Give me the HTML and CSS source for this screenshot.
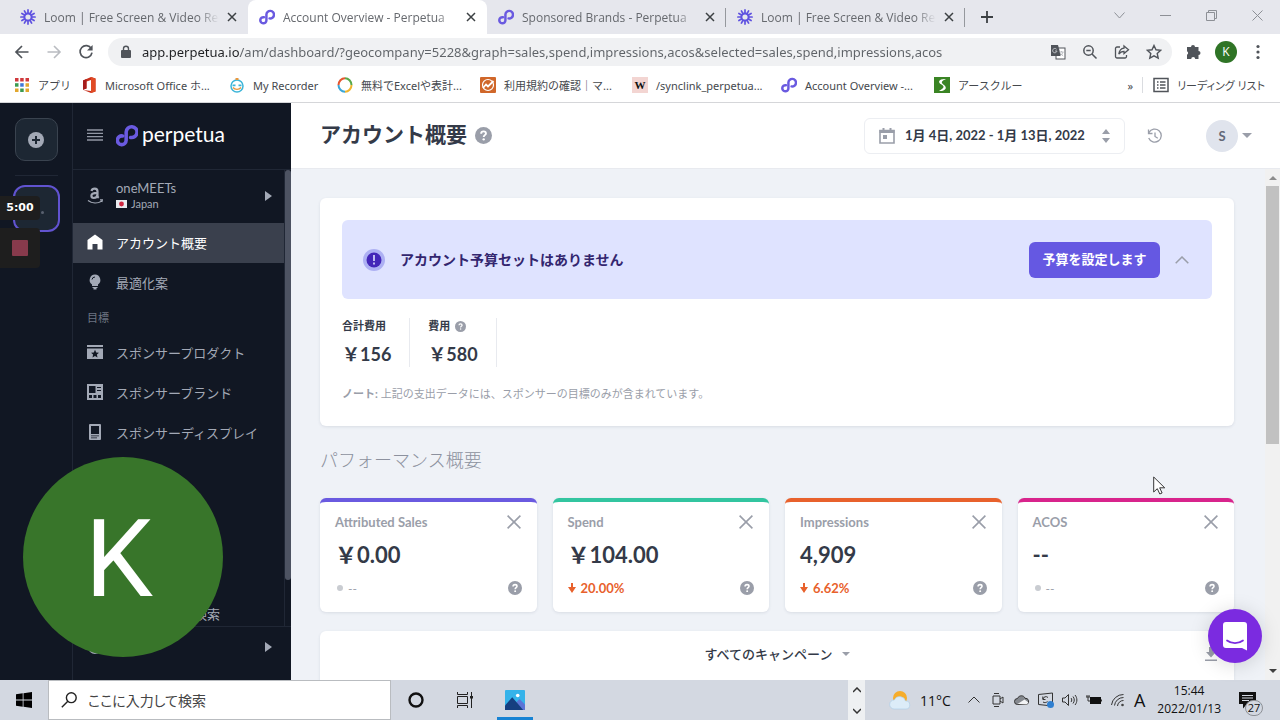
FILE: index.html
```html
<!DOCTYPE html>
<html lang="ja">
<head>
  <meta charset="UTF-8">
  <meta name="viewport" content="width=device-width, initial-scale=1.0">
  <title>Account Overview - Perpetua</title>
  <link rel="stylesheet" href="styles.css">
</head>
<body>
  <!-- shared icons -->
  <svg class="sprite" aria-hidden="true">
    <symbol id="i-perpetua" viewBox="0 0 21 22">
      <path d="M6.2 11.4A4.2 4.2 0 1 0 9.7 15.6V7.6A5.2 5.2 0 1 1 14 12.9" fill="none" stroke="#6a5ae0" stroke-width="3.4" stroke-linecap="round"/>
    </symbol>
    <symbol id="i-loom" viewBox="0 0 16 16">
      <g stroke="#5f52e0" stroke-width="1.7" stroke-linecap="round" fill="none">
        <circle cx="8" cy="8" r="3.6" stroke-width="2"/>
        <path d="M8 .9v3M8 12.1v3M.9 8h3M12.1 8h3M4.4 1.9l1.5 2.6M10.1 11.5l1.5 2.6M1.9 4.4l2.6 1.5M11.5 10.1l2.6 1.5M1.9 11.6l2.6-1.5M11.5 5.9l2.6-1.5M4.4 14.1l1.5-2.6M10.1 4.5l1.5-2.6"/>
      </g>
    </symbol>
    <symbol id="i-close" viewBox="0 0 10 10">
      <path d="M1 1l8 8M9 1L1 9" stroke="currentColor" fill="none"/>
    </symbol>
    <symbol id="i-help" viewBox="0 0 16 16">
      <circle cx="8" cy="8" r="8" fill="#9a9ea9"/>
      <path d="M5.8 6.3c0-1.4 1-2.2 2.3-2.2s2.2.8 2.2 1.9c0 1.6-2.1 1.7-2.1 3.3" fill="none" stroke="#fff" stroke-width="1.8"/>
      <circle cx="8.2" cy="11.6" r="1.1" fill="#fff"/>
    </symbol>
    <symbol id="i-down" viewBox="0 0 8 10">
      <path d="M3 0h2v4h3L4 10 0 4h3z" fill="#e8612c"/>
    </symbol>
  </svg>

  <header class="browser">
    <div class="tabstrip">
      <div class="tab">
        <svg class="favicon"><use href="#i-loom"/></svg>
        <span class="tab-title">Loom | Free Screen &amp; Video Recorder</span>
        <button class="tab-close" aria-label="閉じる"><svg><use href="#i-close"/></svg></button>
      </div>
      <div class="tab active">
        <svg class="favicon"><use href="#i-perpetua"/></svg>
        <span class="tab-title">Account Overview - Perpetua</span>
        <button class="tab-close" aria-label="閉じる"><svg><use href="#i-close"/></svg></button>
      </div>
      <div class="tab divided">
        <svg class="favicon"><use href="#i-perpetua"/></svg>
        <span class="tab-title">Sponsored Brands - Perpetua</span>
        <button class="tab-close" aria-label="閉じる"><svg><use href="#i-close"/></svg></button>
      </div>
      <div class="tab divided">
        <svg class="favicon"><use href="#i-loom"/></svg>
        <span class="tab-title">Loom | Free Screen &amp; Video Recorder</span>
        <button class="tab-close" aria-label="閉じる"><svg><use href="#i-close"/></svg></button>
      </div>
      <button class="new-tab" aria-label="新しいタブ">
        <svg width="12" height="12" viewBox="0 0 12 12"><path d="M6 0v12M0 6h12" stroke="#3c4043" stroke-width="1.8"/></svg>
      </button>
      <div class="window-buttons">
        <button aria-label="タブを検索"><svg width="11" height="11" viewBox="0 0 11 11"><path d="M.5 2.5l5 5.5 5-5.5"/></svg></button>
        <button aria-label="最小化"><svg width="11" height="11" viewBox="0 0 11 11"><path d="M0 5.500h11"/></svg></button>
        <button aria-label="元に戻す"><svg width="11" height="11" viewBox="0 0 11 11"><path d="M.5 2.500h8v8h-8zM2.500 2.500v-2h8v8h-2"/></svg></button>
        <button aria-label="ウィンドウを閉じる"><svg width="11" height="11" viewBox="0 0 11 11"><path d="M.5.5l10 10M10.500.5l-10 10"/></svg></button>
      </div>
    </div>

    <div class="toolbar">
      <button aria-label="戻る"><svg width="16" height="16" viewBox="0 0 16 16"><path d="M14.500 8H2.500M8 2L2 8l6 6" fill="none" stroke="#50545a" stroke-width="1.7"/></svg></button>
      <button aria-label="進む"><svg width="16" height="16" viewBox="0 0 16 16"><path d="M1.500 8h12M8 2l6 6-6 6" fill="none" stroke="#b9bcc1" stroke-width="1.6"/></svg></button>
      <button aria-label="再読み込み"><svg width="16" height="16" viewBox="0 0 16 16"><path d="M13.300 4.600A6 6 0 1 0 14 8.700" fill="none" stroke="#50545a" stroke-width="1.7"/><path d="M14.600 1v5.600H9z" fill="#50545a"/></svg></button>
      <div class="omnibox">
        <svg width="12" height="14" viewBox="0 0 12 14"><rect x="1" y="5" width="10" height="8" rx="1" fill="#50545a"/><path d="M3.500 6V3.700a2.500 2.500 0 0 1 5 0V6" fill="none" stroke="#50545a" stroke-width="1.4"/></svg>
        <input class="url" type="text" aria-label="アドレス" value="app.perpetua.io/am/dashboard/?geocompany=5228&amp;graph=sales,spend,impressions,acos&amp;selected=sales,spend,impressions,acos">
        <button aria-label="翻訳"><svg width="16" height="16" viewBox="0 0 16 16"><rect x="6" y="4" width="9" height="11" fill="#fff" stroke="#50545a"/><path d="M1 1h7l3 11H1z" fill="#50545a"/><path d="M6.600 5.300A2.200 2.200 0 1 0 7 7H5M9.500 8h4M11.500 7v1M10 12c1.500-1 2.500-2 3-4M10.600 9.500l2.600 2.500" fill="none" stroke="#b9bcc1"/></svg></button>
        <button aria-label="ズーム"><svg width="16" height="16" viewBox="0 0 16 16"><g fill="none" stroke="#50545a" stroke-width="1.5"><circle cx="6.500" cy="6.500" r="4.700"/><path d="M10 10l4.500 4.500M4.300 6.500h4.400"/></g></svg></button>
        <button aria-label="共有"><svg width="16" height="16" viewBox="0 0 16 16"><g fill="none" stroke="#50545a" stroke-width="1.3"><path d="M6 3H3a1.500 1.500 0 0 0-1.500 1.500v8A1.500 1.500 0 0 0 3 14h8a1.500 1.500 0 0 0 1.500-1.500V11"/><path d="M10 2l4.500 3.800L10 9.500V7.400C7.500 7.400 6 8.300 4.800 10.200 5.200 7 7 4.500 10 4.200z"/></g></svg></button>
        <button aria-label="ブックマーク"><svg width="16" height="16" viewBox="0 0 16 16"><path d="M8 1.500l2 4.300 4.700.5-3.500 3.200 1 4.700L8 11.800l-4.200 2.400 1-4.700L1.300 6.300 6 5.800z" fill="none" stroke="#50545a" stroke-width="1.4"/></svg></button>
      </div>
      <button aria-label="拡張機能"><svg width="16" height="16" viewBox="0 0 16 16"><path d="M5 3a2 2 0 0 1 4 0h3.500v4a2 2 0 0 1 0 4v4H9.200a2 2 0 0 0-4 0H1v-4.200a2 2 0 0 0 0-3.600V3z" fill="#50545a"/></svg></button>
      <button aria-label="プロフィール"><span class="profile">K</span></button>
      <button aria-label="メニュー"><svg width="4" height="16" viewBox="0 0 4 16"><g fill="#50545a"><circle cx="2" cy="2.500" r="1.600"/><circle cx="2" cy="8" r="1.600"/><circle cx="2" cy="13.500" r="1.600"/></g></svg></button>
    </div>

    <nav class="bookmarks">
      <a href="#"><svg viewBox="0 0 16 16"><path d="M1 1h3.500v3.500H1zM6.200 1h3.500v3.500H6.200z" fill="#d0393c"/><path d="M11.500 1H15v3.500h-3.500z" fill="#d0393c"/><path d="M1 6.200h3.500v3.500H1z" fill="#3c9a50"/><path d="M6.200 6.200h3.500v3.500H6.200z" fill="#4078d8"/><path d="M11.500 6.200H15v3.500h-3.500zM1 11.500h3.500V15H1z" fill="#e2a72e"/><path d="M6.200 11.500h3.500V15H6.200z" fill="#3c9a50"/><path d="M11.500 11.500H15V15h-3.500z" fill="#e2a72e"/></svg>アプリ</a>
      <a href="#"><svg viewBox="0 0 16 16"><path d="M10 0l4.500 1.500v13L10 16l-7.500-3 7.500 1V3L5.500 4.500v7L2 12.800V3.500z" fill="#c8301c"/><path d="M10 0l4.500 1.500v13L10 16z" fill="#e04b25"/><path d="M2 3.500L5.500 2v9.500L2 12.800z" fill="#a51d1d"/></svg>Microsoft Office ホ...</a>
      <a href="#"><svg viewBox="0 0 16 16"><circle cx="8" cy="9" r="6" fill="#fff" stroke="#3db5d8" stroke-width="1.5"/><path d="M6.500 1h3v2h-3z" fill="#e9973e"/><path d="M3.500 7.500h3v1.800h-3zM9.500 7.500h3v1.800h-3z" fill="#3db5d8"/><path d="M4 10.500c2 2.500 6 2.500 8 0" fill="none" stroke="#e9973e" stroke-width="1.4"/></svg>My Recorder</a>
      <a href="#"><svg viewBox="0 0 16 16"><g fill="none" stroke-width="2"><path d="M8 1.200a6.500 6.800 0 0 1 6.500 6.800" stroke="#5aa84a"/><path d="M14.500 8A6.500 6.800 0 0 1 8 14.800" stroke="#efb52f"/><path d="M8 14.800A6.500 6.800 0 0 1 1.500 8" stroke="#3aa6d8"/><path d="M1.500 8A6.500 6.800 0 0 1 8 1.200" stroke="#e5562f"/></g></svg>無料でExcelや表計...</a>
      <a href="#"><svg viewBox="0 0 16 16"><rect width="16" height="16" rx="1" fill="#d0672a"/><circle cx="8" cy="8" r="5.500" fill="none" stroke="#fff" stroke-width="1.2"/><path d="M3 11l3-3.500 2 2L13.500 4" fill="none" stroke="#fff" stroke-width="1.8"/></svg>利用規約の確認｜マ...</a>
      <a href="#"><span class="wp">W</span>/synclink_perpetua...</a>
      <a href="#"><svg><use href="#i-perpetua"/></svg>Account Overview -...</a>
      <a href="#"><svg viewBox="0 0 16 16"><rect width="16" height="16" fill="#3a8424"/><path d="M12 2C5 1.500 3 5 7.500 7.500S8 12 5 14c6 .5 9-3 5-6S8 4 12 2z" fill="#fff"/></svg>アースクルー</a>
      <span class="more">»</span>
      <a class="reading" href="#"><svg viewBox="0 0 16 16"><rect x="1" y="1.500" width="14" height="13" fill="none" stroke="#50545a" stroke-width="1.5"/><path d="M4 5h1.500M4 8h1.500M4 11h1.500M7 5h5.500M7 8h5.500M7 11h5.500" stroke="#50545a" stroke-width="1.5"/></svg>リーディング リスト</a>
    </nav>
  </header>

  <div class="app">
    <aside class="rail">
      <button class="rail-add" aria-label="追加"><svg width="16" height="16" viewBox="0 0 16 16"><circle cx="8" cy="8" r="8" fill="#a3a9b6"/><path d="M8 4v8M4 8h8" stroke="#1d2733" stroke-width="2"/></svg></button>
      <hr>
      <button class="rail-current" aria-label="ワークスペース"><i></i></button>
    </aside>

    <aside class="sidebar">
      <div class="brand">
        <button class="burger" aria-label="メニュー"><svg width="16" height="12" viewBox="0 0 16 12"><path d="M0 1h16M0 4.300h16M0 7.700h16M0 11h16" stroke="#9298a5" stroke-width="1.3"/></svg></button>
        <svg class="brand-mark"><use href="#i-perpetua"/></svg>
        <span class="brand-name">perpetua</span>
      </div>
      <div class="side-scroll">
        <nav class="side-nav">
          <a class="account" href="#">
            <svg width="16" height="18" viewBox="0 0 16 18"><g fill="none" stroke="#a3a9b6"><path d="M4.500 4C5 2 6.300 1.700 7.700 1.700c2 0 2.800 1 2.800 2.800v4.300c0 .9.400 1.500 1.200 2.100M10.400 5.800c-3.500 0-6 .6-6 3 0 1.500 1 2.200 2.300 2.200 1.900 0 3.700-1.200 3.700-3.400" stroke-width="2.2"/><path d="M1 13.500c4 3 9.500 3.200 13.500.7M13 12.800h2.300l-.5 2.200" stroke-width="1.3"/></g></svg>
            <span class="account-text">oneMEETs<small><svg width="11" height="8" viewBox="0 0 11 8"><rect width="11" height="8" fill="#e9ebef"/><circle cx="5.500" cy="4" r="2.400" fill="#cf2740"/></svg>Japan</small></span>
            <i class="arrow"></i>
          </a>
          <a class="current" href="#"><svg width="16" height="16" viewBox="0 0 16 16"><path d="M8 .5L15.500 6v9.500H10.500V10h-5v5.500H.5V6z" fill="#fff"/></svg>アカウント概要</a>
          <a href="#"><svg width="16" height="16" viewBox="0 0 16 16"><path d="M8 .5a5.500 5.500 0 0 1 3 10V12H5v-1.500a5.500 5.500 0 0 1 3-10zM5.500 13h5v1h-1v1.500h-3V14h-1z" fill="#a3a9b6"/><path d="M5 5.500A3 3 0 0 1 8 3" fill="none" stroke="#111723"/></svg>最適化案</a>
          <h3>目標</h3>
          <a href="#"><svg width="16" height="16" viewBox="0 0 16 16"><path d="M0 1h16v2H0zM0 4.500h16V15H0z" fill="#a3a9b6"/><path d="M8 5.800l1.200 2.600 2.800.3-2.100 1.900.6 2.800L8 12l-2.500 1.400.6-2.800L4 8.700l2.800-.3z" fill="#111723"/></svg>スポンサープロダクト</a>
          <a href="#"><svg width="16" height="16" viewBox="0 0 16 16"><rect width="16" height="16" fill="#a3a9b6"/><path d="M2 2h6.500v7H2zM10 3h4v1h-4zM10 6h4v1h-4zM2 11h3v3H2zM6.500 11h3v3h-3zM11 11h3v3h-3z" fill="#111723"/></svg>スポンサーブランド</a>
          <a href="#"><svg width="16" height="16" viewBox="0 0 16 16"><rect x="2" width="12" height="16" rx="1" fill="#a3a9b6"/><path d="M4 2h8v8H4zM4 11.500h8v.8H4zM4 13.500h6v.8H4z" fill="#111723"/></svg>スポンサーディスプレイ</a>
          <a class="last" href="#">キーワードの検索</a>
        </nav>
        <div class="side-bar"><i></i></div>
      </div>
      <a class="side-foot" href="#" aria-label="アカウント"><svg width="16" height="16" viewBox="0 0 16 16"><circle cx="8" cy="8" r="7" fill="#a3a9b6"/></svg><i class="arrow"></i></a>
    </aside>

    <main class="main">
      <div class="page-head">
        <h1>アカウント概要</h1>
        <svg class="head-help"><use href="#i-help"/></svg>
        <button class="date-range">
          <svg width="16" height="16" viewBox="0 0 16 16"><path d="M1 2.500h14V15H1z" fill="none" stroke="#9a9ea9" stroke-width="1.6"/><path d="M.5 2h15v3H.5zM3.500 0h2v3h-2zM10.500 0h2v3h-2zM4 7h4v4H4z" fill="#9a9ea9"/></svg>
          <span>1月 4日, 2022 - 1月 13日, 2022</span>
          <svg width="8" height="14" viewBox="0 0 8 14"><path d="M4 0l4 5H0zM4 14l4-5H0z" fill="#9a9ea9"/></svg>
        </button>
        <button class="history" aria-label="履歴"><svg width="16" height="16" viewBox="0 0 16 16"><path d="M2 4.500A6.500 6.500 0 1 1 1.700 10M1.500 1.500v4h4M8 4.500V8.500l2.800 1.700" fill="none" stroke="#9a9ea9" stroke-width="1.3"/></svg></button>
        <button class="user" aria-label="ユーザー"><span>S</span><i class="caret"></i></button>
      </div>

      <div class="content-row">
        <div class="content">
          <section class="card budget">
            <div class="banner">
              <svg width="22" height="22" viewBox="0 0 22 22"><circle cx="11" cy="11" r="11" fill="#adb0f3"/><circle cx="11" cy="11" r="7.500" fill="#4326b8"/><path d="M11 6v6M11 13.500v2" stroke="#dfe3ff" stroke-width="1.6"/></svg>
              <h2>アカウント予算セットはありません</h2>
              <button class="primary">予算を設定します</button>
              <button class="collapse" aria-label="折りたたむ"><svg width="14" height="8" viewBox="0 0 14 8"><path d="M.7 7.300L7 1l6.300 6.300" fill="none" stroke="#9a9ea9" stroke-width="1.5"/></svg></button>
            </div>
            <dl class="totals">
              <div><dt>合計費用</dt><dd>￥156</dd></div>
              <div><dt>費用 <svg><use href="#i-help"/></svg></dt><dd>￥580</dd></div>
            </dl>
            <p class="note"><b>ノート:</b> 上記の支出データには、スポンサーの目標のみが含まれています。</p>
          </section>

          <h2 class="section-title">パフォーマンス概要</h2>

          <div class="metrics">
            <section class="card metric sales">
              <header><h3>Attributed Sales</h3><button aria-label="削除"><svg><use href="#i-close"/></svg></button></header>
              <strong>￥0.00</strong>
              <footer><span class="flat"><i></i>--</span><svg><use href="#i-help"/></svg></footer>
            </section>
            <section class="card metric spend">
              <header><h3>Spend</h3><button aria-label="削除"><svg><use href="#i-close"/></svg></button></header>
              <strong>￥104.00</strong>
              <footer><span class="down"><svg><use href="#i-down"/></svg>20.00%</span><svg><use href="#i-help"/></svg></footer>
            </section>
            <section class="card metric impressions">
              <header><h3>Impressions</h3><button aria-label="削除"><svg><use href="#i-close"/></svg></button></header>
              <strong>4,909</strong>
              <footer><span class="down"><svg><use href="#i-down"/></svg>6.62%</span><svg><use href="#i-help"/></svg></footer>
            </section>
            <section class="card metric acos">
              <header><h3>ACOS</h3><button aria-label="削除"><svg><use href="#i-close"/></svg></button></header>
              <strong>--</strong>
              <footer><span class="flat"><i></i>--</span><svg><use href="#i-help"/></svg></footer>
            </section>
          </div>

          <section class="card chart">
            <label class="campaign">
              <select aria-label="キャンペーン"><option>すべてのキャンペーン</option></select>
              <i class="caret"></i>
            </label>
            <button class="download" aria-label="ダウンロード"><svg width="14" height="14" viewBox="0 0 14 14"><path d="M5 0h4v5h3L7 10.500 2 5h3zM1 12.500h12V14H1z" fill="#9a9ea9"/></svg></button>
          </section>
        </div>
        <div class="scrollbar"><i class="up"></i><i class="thumb"></i><i class="dn"></i></div>
      </div>
    </main>
  </div>

  <footer class="taskbar">
    <button class="start" aria-label="スタート"><svg width="16" height="16" viewBox="0 0 16 16"><path d="M0 2.300L6.700 1.300V7.600H0zM7.500 1.200L16 0v7.600H7.500zM0 8.400h6.700v6.300L0 13.700zM7.500 8.400H16V16l-8.500-1.200z" fill="#000"/></svg></button>
    <label class="search">
      <svg width="16" height="16" viewBox="0 0 16 16"><g fill="none" stroke="#222" stroke-width="1.4"><circle cx="10.300" cy="5.700" r="4.900"/><path d="M6.800 9.200L.8 15.200"/></g></svg>
      <input type="text" placeholder="ここに入力して検索" aria-label="検索">
    </label>
    <button class="task" aria-label="Cortana"><svg width="16" height="16" viewBox="0 0 16 16"><circle cx="8" cy="8" r="6.500" fill="none" stroke="#111" stroke-width="2.4"/></svg></button>
    <button class="task" aria-label="タスク ビュー"><svg width="16" height="16" viewBox="0 0 16 16"><g fill="none" stroke="#222"><path d="M.5 0v2.500h10V0M.5 4.500h10v7H.5zM.5 16v-2.500h10V16M14.500 0v16"/></g><path d="M13 4h3v2.500h-3z" fill="#222"/></svg></button>
    <button class="task running" aria-label="フォト"><svg width="20" height="20" viewBox="0 0 22 22"><rect width="22" height="22" rx="1" fill="#35b3ea"/><path d="M9 17l7-7 6 6v6H9z" fill="#5b74d6"/><path d="M0 17L8 8l12 14H0z" fill="#153f80"/><circle cx="14" cy="6" r="2" fill="#fff"/></svg></button>
    <div class="pager">
      <svg width="8" height="6" viewBox="0 0 8 6"><path d="M0 5l4-4 4 4"/></svg>
      <svg width="8" height="6" viewBox="0 0 8 6"><path d="M0 1l4 4 4-4"/></svg>
    </div>
    <div class="weather">
      <svg width="22" height="20" viewBox="0 0 22 20"><circle cx="11" cy="8" r="7" fill="#f6ad2b"/><path d="M5 19a4.500 4.500 0 0 1 .3-9A6 6 0 0 1 16.500 11a4 4 0 0 1 .5 8z" fill="#dcecf8" stroke="#a9cde8" stroke-width=".6"/></svg>
      11°C
    </div>
    <div class="tray">
      <svg viewBox="0 0 16 16"><path d="M2.500 10.500l5.500-5.500 5.500 5.500"/></svg>
      <svg viewBox="0 0 16 16"><path d="M3 4h7v8H3zM10 7l3-2v6l-3-2M4 1.500h5M4 14.500h5"/></svg>
      <svg viewBox="0 0 16 16"><path class="cloud" d="M3.500 12.500a3 3 0 0 1 0-6C5 2.800 10 3 11 6.300a3.200 3.200 0 0 1 1.500 6.200z"/><path class="cloud-light" d="M3.500 12l7-4.500 4 3-2 2z"/></svg>
      <svg viewBox="0 0 16 16"><path d="M.5 2.500L14.500 1v13l-14-1.500zM10 5.500A3 3 0 0 0 5 7M4.800 4.500V7.500H7.500M5 10c1.500 1 3 .8 4.500-.5"/><circle cx="12.500" cy="12.500" r="3.500" fill="#2f7fd0"/></svg>
      <svg viewBox="0 0 16 16"><path d="M.5 6h2.500l3.500-3.500v11L3 10H.5zM9 6c1 1 1 3 0 4M11 4.500c1.700 2 1.700 5 0 7M13 3c2.500 3 2.500 7 0 10"/></svg>
      <svg viewBox="0 0 16 16"><rect x="4" y="5" width="11" height="7" fill="#111"/><path d="M0 5h4M2 5v4h2M1 3v2M3 3v2M15.500 7.500v2"/></svg>
      <svg viewBox="0 0 16 16"><path d="M1.500 13A12 12 0 0 1 13.500 2.500M4.500 13.500A9 9 0 0 1 13.500 5.500M7.500 14A6 6 0 0 1 13.500 8.500"/><circle cx="12.500" cy="13" r="1.300" fill="#444"/></svg>
      <span class="ime">A</span>
    </div>
    <time class="clock">15:44<br>2022/01/13</time>
    <button class="notices" aria-label="通知"><svg width="17" height="17" viewBox="0 0 17 17"><path d="M0 0h17v12H8l-4 4.500V12H0z" fill="#111"/><path d="M3 3.500h11M3 6h11M3 8.500h7" stroke="#d3d8e1"/></svg><span>27</span></button>
  </footer>

  <!-- recorder overlay -->
  <div class="rec-time">5:00</div>
  <button class="rec-stop" aria-label="停止"><i></i></button>
  <div class="camera">K</div>
  <button class="chat" aria-label="チャット"><svg width="26" height="30" viewBox="0 0 26 30"><path d="M4 1h18a3 3 0 0 1 3 3v25.500L20 27H4a3 3 0 0 1-3-3V4a3 3 0 0 1 3-3z" fill="#fff"/><path d="M5 19.500c4.500 3.500 11.500 3.500 16 0" fill="none" stroke="#7b2be0" stroke-width="1.7" stroke-linecap="round"/></svg></button>
  <svg class="pointer" width="13" height="19" viewBox="0 0 13 19"><path d="M.7 1v15l3.600-3.300 2.500 5.300 2.300-1-2.400-5.200h5z" fill="#fff" stroke="#222" stroke-width=".9"/></svg>
</body>
</html>
```

FILE: styles.css
```css
* {
  box-sizing: border-box;
}
body {
  margin: 0;
  height: 100vh;
  display: flex;
  flex-direction: column;
  overflow: hidden;
  position: relative;
  font-family: Lato, "Noto Sans CJK JP", sans-serif;
  color: #343a48;
}
h1, h2, h3, p, dl, dd {
  margin: 0;
}
a {
  color: inherit;
  text-decoration: none;
}
button {
  padding: 0;
  border: none;
  background: none;
  font: inherit;
  color: inherit;
  display: flex;
  align-items: center;
  justify-content: center;
}
svg {
  flex: none;
  display: block;
}
.sprite {
  display: none;
}

/* browser */
.browser, .taskbar {
  font-family: "Open Sans", "Noto Sans CJK JP", sans-serif;
  flex: none;
}
.browser {
  background: #fff;
  border-bottom: 1px solid #d5d6d9;
}
.tabstrip {
  display: flex;
  height: 34px;
  padding-left: 9px;
  background: #e6e7ed;
}
.tab {
  flex: 0 1 239px;
  min-width: 0;
  display: flex;
  align-items: center;
  gap: 8px;
  padding: 0 11px;
  font-size: 12px;
  color: #66696e;
  position: relative;
}
.tab.active {
  background: #fff;
  border-radius: 8px 8px 0 0;
}
.tab.divided::after {
  content: "";
  position: absolute;
  right: 0;
  top: 8px;
  height: 19px;
  border-right: 1px solid #95989d;
}
.favicon {
  width: 16px;
  height: 16px;
}
.tab-title {
  flex: 1;
  overflow: hidden;
  white-space: nowrap;
  -webkit-mask-image: linear-gradient(to right, #000 88%, transparent);
  mask-image: linear-gradient(to right, #000 88%, transparent);
}
.tab-close svg {
  width: 10px;
  height: 10px;
  color: #3c4043;
  stroke-width: 1.5;
}
.new-tab {
  width: 44px;
}
.window-buttons {
  display: flex;
  margin-left: auto;
  height: 30px;
}
.window-buttons button {
  width: 46px;
}
.window-buttons path {
  fill: none;
  stroke: #8d9096;
}
.toolbar {
  display: flex;
  align-items: center;
  height: 36px;
  padding: 0 6px;
}
.toolbar button {
  width: 32px;
  height: 28px;
  flex: none;
}
.omnibox {
  flex: 1;
  display: flex;
  align-items: center;
  height: 28px;
  margin: 0 6px;
  padding: 0 2px 0 12px;
  border-radius: 14px;
  background: #f0f1f3;
}
.url {
  flex: 1;
  min-width: 0;
  margin-left: 10px;
  padding: 0;
  border: none;
  font: 13px "Noto Sans", sans-serif;
  color: #5f6368;
  background: linear-gradient(to right, #202124 98px, #5f6368 98px);
  -webkit-background-clip: text;
  background-clip: text;
  -webkit-text-fill-color: transparent;
}
.profile {
  width: 22px;
  height: 22px;
  border-radius: 50%;
  background: #2f7426;
  color: #fff;
  font-size: 12px;
  line-height: 22px;
}
.bookmarks {
  display: grid;
  grid-template-columns: 67px 148px 108px 143px 152px 149px 153px 1fr auto auto;
  align-items: center;
  height: 32px;
  padding: 0 15px 2px 14px;
  font-family: "Noto Sans", "Noto Sans CJK JP", sans-serif;
  font-size: 11px;
  color: #45484d;
  white-space: nowrap;
}
.bookmarks a {
  display: flex;
  align-items: center;
  gap: 8px;
}
.bookmarks svg, .wp {
  width: 16px;
  height: 16px;
}
.wp {
  background: #f3d5d2;
  color: #111;
  font: bold 11px/16px "Liberation Serif", serif;
  text-align: center;
}
.more {
  padding-right: 9px;
}
.reading {
  padding-left: 10px;
  border-left: 1px solid #dadce0;
  font-feature-settings: "palt";
}

/* app */
.app {
  flex: 1;
  min-height: 0;
  display: flex;
  background: #eff2f7;
}
.rail {
  flex: none;
  width: 73px;
  padding-top: 15px;
  display: flex;
  flex-direction: column;
  align-items: center;
  background: #111723;
  border-right: 1px solid #202735;
}
.rail-add {
  width: 43px;
  height: 43px;
  border: 1px solid #3a434f;
  border-radius: 10px;
  background: #1d2733;
}
.rail hr {
  width: 43px;
  margin: 14px 0 9px;
  border: none;
  border-top: 1px solid #202735;
}
.rail-current {
  width: 47px;
  height: 47px;
  border: 2px solid #6153d0;
  border-radius: 12px;
  background: #1d2733;
}
.rail-current i {
  width: 3px;
  height: 3px;
  margin: 8px 0 0 12px;
  border-radius: 50%;
  background: #596170;
}
.sidebar {
  flex: none;
  width: 218px;
  display: flex;
  flex-direction: column;
  background: #111723;
  color: #a3a9b6;
}
.brand {
  display: flex;
  align-items: center;
  height: 67px;
  padding: 0 14px 2px;
  border-bottom: 1px solid #202735;
}
.brand-mark {
  width: 22px;
  height: 23px;
  margin: 0 4px 0 13px;
}
.brand-name {
  padding-bottom: 3px;
  font-size: 21px;
  line-height: 24px;
  color: #fff;
}
.side-scroll {
  flex: 1;
  min-height: 0;
  display: flex;
  border-bottom: 1px solid #202735;
}
.side-nav {
  flex: 1;
  display: flex;
  flex-direction: column;
  font-size: 13px;
}
.side-nav a {
  display: flex;
  align-items: center;
  gap: 13px;
  height: 40px;
  padding: 0 14px 2px;
}
.side-nav .account {
  height: 53px;
}
.account-text {
  line-height: 16px;
}
.account small {
  display: flex;
  align-items: center;
  gap: 4px;
  font-size: 11px;
}
.arrow {
  margin-left: auto;
  border: 5px solid transparent;
  border-left: 7px solid #a3a9b6;
  border-right: none;
}
.side-nav .account .arrow {
  margin-right: -2px;
}
.side-nav .current {
  background: #3a404d;
  color: #fff;
}
.side-nav h3 {
  padding: 7px 14px;
  font-size: 11px;
  line-height: 16px;
  font-weight: normal;
  color: #6d7482;
}
.side-nav .last {
  margin-top: auto;
  height: 24px;
  padding-left: 43px;
}
.side-bar {
  width: 7px;
  border-left: 1px solid #202735;
}
.side-bar i {
  display: block;
  height: 90%;
  border-radius: 3px;
  background: #4d5362;
}
.side-foot {
  display: flex;
  align-items: center;
  height: 53px;
  padding: 0 19px 14px 14px;
}

/* main */
.main {
  flex: 1;
  min-width: 0;
  display: flex;
  flex-direction: column;
}
.page-head {
  flex: none;
  display: flex;
  align-items: center;
  height: 66px;
  padding: 0 28px 0 29px;
  background: #fff;
  border-bottom: 1px solid #e8eaef;
}
.page-head h1 {
  padding-bottom: 4px;
  font-size: 21px;
  line-height: 32px;
}
.head-help {
  width: 17px;
  height: 17px;
  margin-left: 8px;
}
.date-range {
  width: 261px;
  height: 36px;
  margin-left: auto;
  padding: 0 14px;
  border: 1px solid #eceef2;
  border-radius: 6px;
  font-size: 13px;
  font-weight: bold;
  white-space: nowrap;
}
.date-range span {
  flex: 1;
  padding: 0 0 2px 10px;
  text-align: left;
}
.history {
  margin: 0 43px 0 22px;
}
.user {
  gap: 4px;
}
.user span {
  width: 32px;
  height: 32px;
  border-radius: 50%;
  background: #e0e4ed;
  font-size: 13px;
  font-weight: bold;
  line-height: 32px;
  color: #626877;
}
.caret {
  border: 5px solid transparent;
  border-top-color: #9a9ea9;
  border-bottom: none;
}
.content-row {
  flex: 1;
  min-height: 0;
  display: flex;
}
.content {
  flex: 1;
  min-width: 0;
  overflow: hidden;
  padding: 29px 31px 0 29px;
}
.card {
  background: #fff;
  border-radius: 6px;
  box-shadow: 0 1px 3px rgba(60, 70, 100, 0.12);
}
.budget {
  padding: 22px 22px 24px;
}
.banner {
  display: flex;
  align-items: center;
  height: 79px;
  padding: 0 23px 0 21px;
  border-radius: 6px;
  background: #dfe3ff;
}
.banner h2 {
  margin: 0 auto 0 15px;
  padding-bottom: 2px;
  font-size: 14px;
  color: #33266f;
}
.primary {
  width: 131px;
  height: 36px;
  padding-bottom: 2px;
  border-radius: 6px;
  background: #6558e2;
  color: #fff;
  font-size: 13px;
  font-weight: bold;
}
.collapse {
  margin-left: 15px;
}
.totals {
  display: flex;
  gap: 18px;
  margin-top: 19px;
}
.totals div {
  padding-right: 18px;
  border-right: 1px solid #e8eaef;
}
.totals dt {
  display: flex;
  align-items: center;
  gap: 5px;
  font-size: 11px;
  font-weight: bold;
  line-height: 16px;
}
.totals svg {
  width: 11px;
  height: 11px;
}
.totals dd {
  margin-top: 8px;
  font-size: 18px;
  font-weight: bold;
  line-height: 25px;
}
.note {
  margin-top: 19px;
  font-size: 11px;
  line-height: 16px;
  color: #9a9ea9;
}
.section-title {
  margin: 21px 0 25px;
  font-size: 18px;
  font-weight: 300;
  line-height: 26px;
  color: #8c919e;
}
.metrics {
  display: grid;
  grid-template-columns: repeat(4, 1fr);
  gap: 16px;
}
.metric {
  padding: 11px 15px 15px;
  border-top: 4px solid;
}
.sales { border-top-color: #6a5ae0; }
.spend { border-top-color: #33c5a0; }
.impressions { border-top-color: #e8612c; }
.acos { border-top-color: #d8248c; }
.metric header, .metric footer {
  display: flex;
  align-items: center;
  justify-content: space-between;
}
.metric h3 {
  font-size: 13px;
  line-height: 18px;
  color: #9a9ea9;
}
.metric button svg {
  width: 16px;
  height: 16px;
  color: #9a9ea9;
  stroke-width: 1;
}
.metric strong {
  display: block;
  margin: 8px 0;
  font-size: 22px;
  line-height: 32px;
}
.metric footer {
  height: 18px;
  font-size: 13px;
}
.metric footer > svg {
  width: 14px;
  height: 14px;
}
.flat, .down {
  display: flex;
  align-items: center;
  gap: 5px;
}
.flat {
  padding-left: 2px;
  font-size: 12px;
  color: #9a9ea9;
}
.flat i {
  width: 6px;
  height: 6px;
  border-radius: 50%;
  background: #c9ccd1;
}
.down {
  font-weight: bold;
  color: #e8612c;
}
.down svg {
  width: 8px;
  height: 10px;
}
.chart {
  display: grid;
  grid-template-columns: 1fr auto 1fr;
  align-items: center;
  height: 120px;
  margin-top: 19px;
  padding: 13px 16px;
  align-content: start;
}
.campaign {
  grid-column: 2;
  display: flex;
  align-items: center;
  gap: 6px;
}
.campaign select {
  appearance: none;
  padding: 0;
  border: none;
  background: none;
  font: 500 13px/20px "Noto Sans CJK JP", sans-serif;
  color: #343a48;
}
.campaign .caret {
  border-width: 4px 4px 0;
}
.download {
  justify-self: end;
}
.scrollbar {
  width: 15px;
  display: flex;
  flex-direction: column;
  align-items: center;
  background: #f1f1f1;
  padding: 7px 0;
}
.scrollbar .up {
  border: 4px solid transparent;
  border-bottom-color: #8c8c8c;
  border-top: none;
}
.scrollbar .thumb {
  width: 13px;
  height: 52%;
  margin: 6px 0 auto;
  background: #c1c1c1;
}
.scrollbar .dn {
  border: 4px solid transparent;
  border-top-color: #404040;
  border-bottom: none;
}

/* taskbar */
.taskbar {
  display: flex;
  height: 40px;
  background: #d3d8e1;
  color: #111;
}
.start {
  width: 48px;
}
.search {
  width: 343px;
  display: flex;
  align-items: center;
  gap: 11px;
  padding: 0 12px;
  border: 1px solid #b9bcc0;
  background: #fff;
}
.search input {
  flex: 1;
  min-width: 0;
  padding: 0;
  border: none;
  font: 14px "Noto Sans CJK JP", sans-serif;
  font-feature-settings: "palt";
}
.search input::placeholder {
  color: #444;
}
.task {
  width: 49px;
}
.running {
  width: 36px;
  margin-left: 8px;
  border-bottom: 3px solid #1783d3;
  padding-top: 3px;
}
.pager {
  width: 17px;
  margin-left: auto;
  display: flex;
  flex-direction: column;
  align-items: center;
  justify-content: space-between;
  padding: 7px 0 6px;
  background: #eef0f2;
}
.pager path, .tray path {
  fill: none;
  stroke: #333;
}
.pager path {
  stroke-width: 1.5;
}
.tray .cloud {
  fill: #85898f;
}
.tray .cloud-light {
  fill: #f2f3f5;
  stroke: none;
}
.weather {
  display: flex;
  align-items: center;
  gap: 9px;
  margin: 0 15px 0 24px;
  font-size: 14px;
}
.tray {
  display: flex;
  align-items: center;
  gap: 8px;
}
.tray svg {
  width: 16px;
  height: 16px;
}
.ime {
  font-size: 18px;
}
.clock {
  margin-left: 12px;
  font-size: 12px;
  line-height: 18px;
  padding-top: 2px;
  text-align: center;
}
.notices {
  width: 59px;
  position: relative;
  padding-right: 6px;
}
.notices span {
  position: absolute;
  left: 24px;
  top: 20px;
  width: 18px;
  height: 16px;
  border: 1px solid #8d9096;
  border-radius: 8px;
  background: #d3d8e1;
  font-size: 11px;
  line-height: 14px;
}

/* overlays */
.rec-time, .rec-stop, .camera, .chat, .pointer {
  position: absolute;
}
.rec-time {
  left: 0;
  top: 196px;
  width: 40px;
  height: 24px;
  border-radius: 0 4px 4px 0;
  background: #1e1e1e;
  color: #fff;
  font: bold 11px/24px "DejaVu Sans", sans-serif;
  text-align: center;
}
.rec-stop {
  left: 0;
  top: 228px;
  width: 40px;
  height: 40px;
  border-radius: 0 4px 4px 0;
  background: #1e1e1e;
}
.rec-stop i {
  width: 16px;
  height: 16px;
  border-radius: 1px;
  background: #873a4c;
}
.camera {
  left: 23px;
  bottom: 63px;
  width: 200px;
  height: 200px;
  padding-right: 8px;
  border-radius: 50%;
  background: #38752a;
  color: #fff;
  font: 108px/204px Roboto, sans-serif;
  text-align: center;
}
.chat {
  right: 18px;
  bottom: 57px;
  width: 54px;
  height: 54px;
  border-radius: 50%;
  background: #7b2be0;
  box-shadow: 0 2px 20px rgba(0, 0, 0, 0.15);
}
.pointer {
  left: 1153px;
  top: 476px;
}
```
